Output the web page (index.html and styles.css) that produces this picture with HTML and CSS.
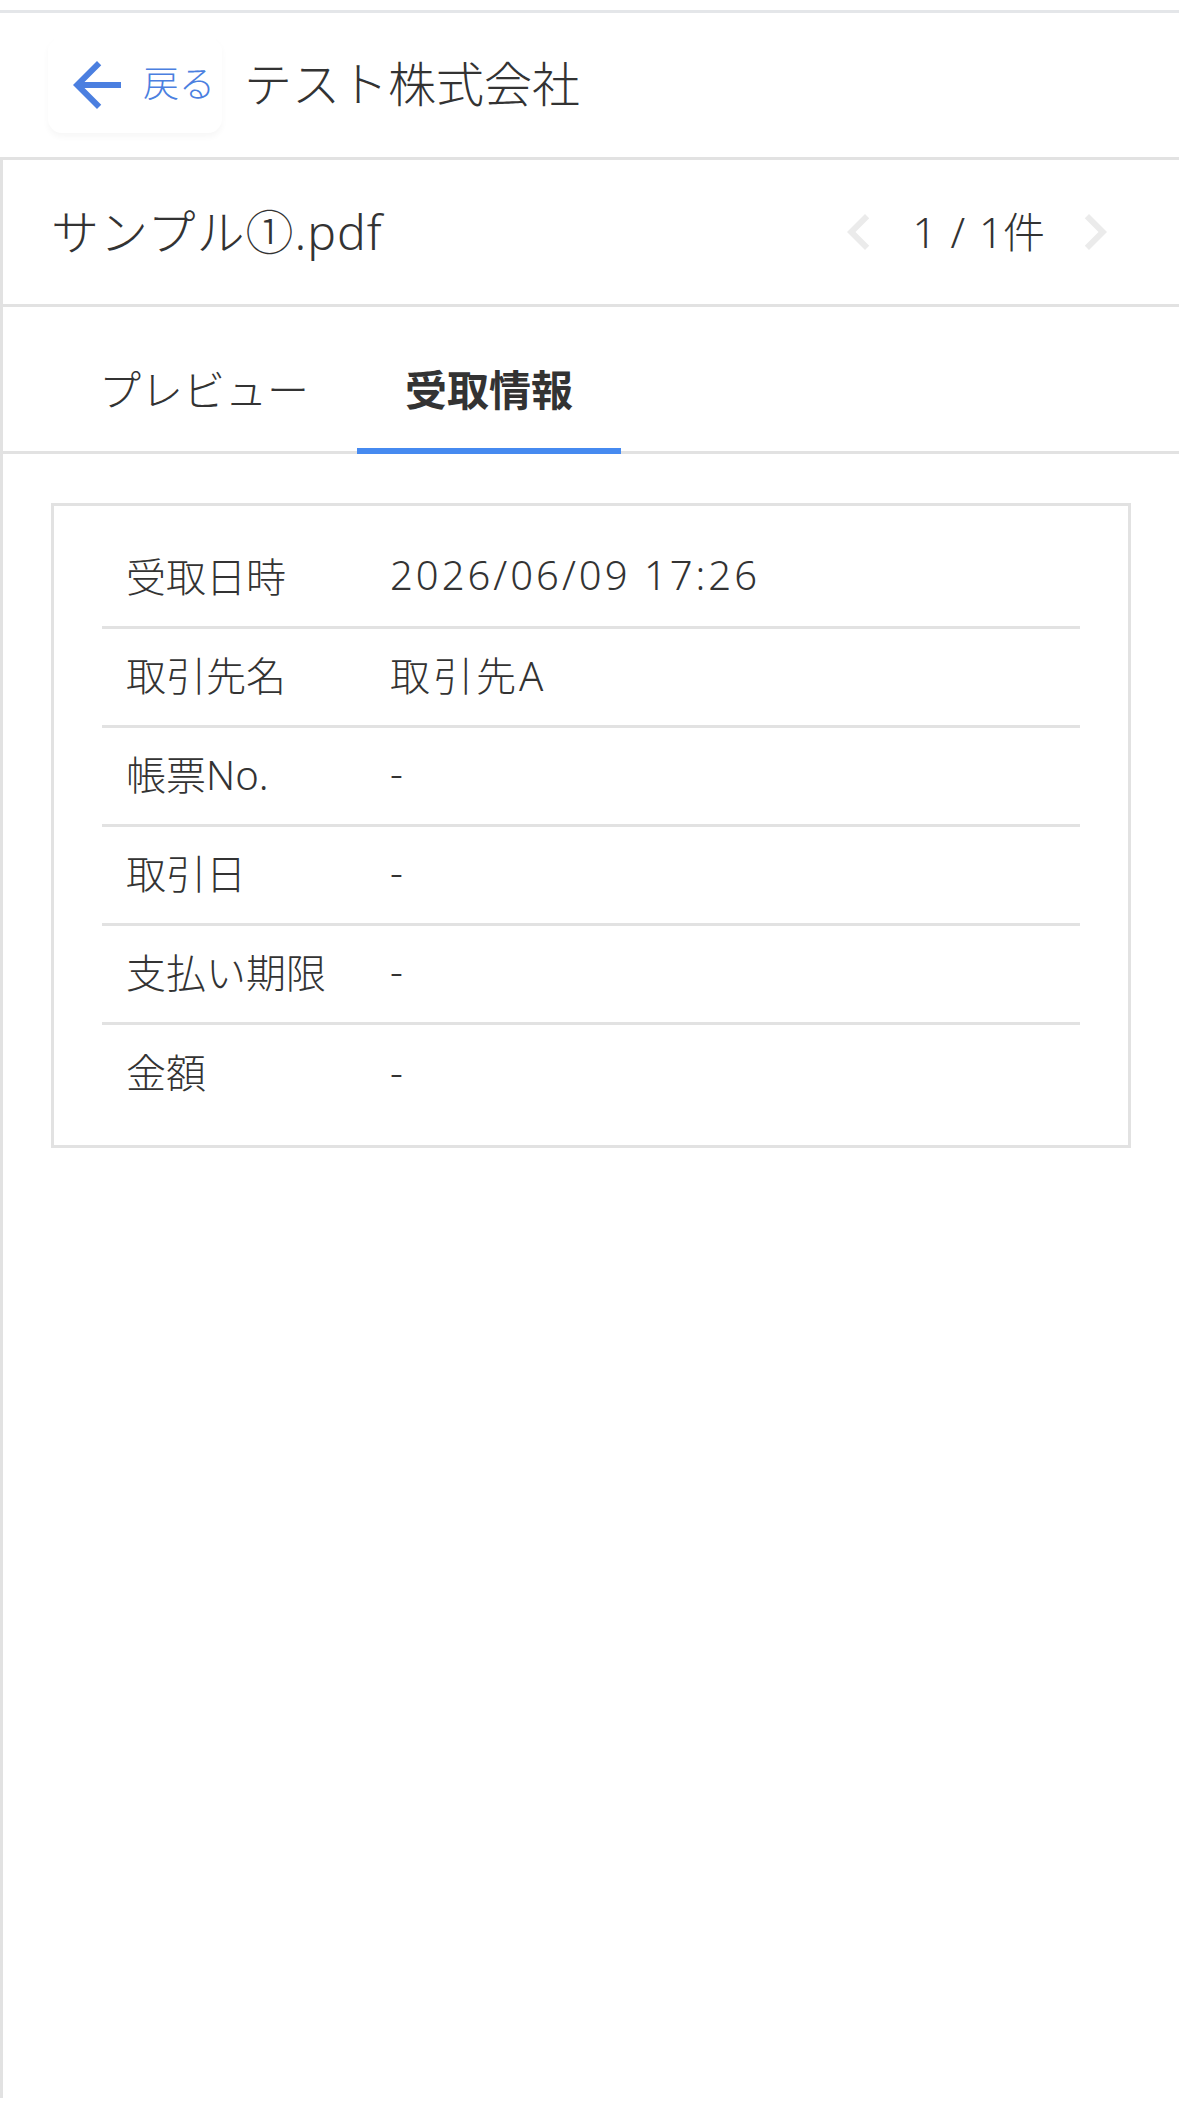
FILE: index.html
```html
<!DOCTYPE html>
<html lang="ja">
<head>
  <meta charset="UTF-8" />
  <meta name="viewport" content="width=device-width, initial-scale=1.0" />
  <title>受取情報 - テスト株式会社</title>
  <link rel="stylesheet" href="styles.css">
</head>
<body>
<div class="topbar"></div>

<!-- ヘッダー -->
<header class="header">
  <button class="back-btn" type="button">
    <svg class="back-icon" viewBox="0 0 24 24"><path d="M20 11H7.83l5.59-5.59L12 4l-8 8 8 8 1.41-1.41L7.83 13H20v-2z"/></svg>
    <span>戻る</span>
  </button>
  <h1 class="company">テスト株式会社</h1>
</header>

<main class="panel">
  <!-- ファイル名とページ送り -->
  <div class="file-row">
    <h2 class="file-name">サンプル①.pdf</h2>
    <div class="pager">
      <svg class="pager-icon" viewBox="0 0 24 24"><path d="M15.41 7.41L14 6l-6 6 6 6 1.41-1.41L10.83 12z"/></svg>
      <span class="pager-count">1 / 1件</span>
      <svg class="pager-icon" viewBox="0 0 24 24"><path d="M10 6L8.59 7.41 13.17 12l-4.58 4.59L10 18l6-6z"/></svg>
    </div>
  </div>

  <!-- タブ -->
  <nav class="tabs">
    <div class="tab">プレビュー</div>
    <div class="tab active">受取情報</div>
  </nav>

  <!-- 受取情報 -->
  <section class="info-card">
    <dl class="info-list">
      <div class="info-row"><dt>受取日時</dt><dd>2026/06/09 17:26</dd></div>
      <div class="info-row"><dt>取引先名</dt><dd>取引先A</dd></div>
      <div class="info-row"><dt>帳票No.</dt><dd>-</dd></div>
      <div class="info-row"><dt>取引日</dt><dd>-</dd></div>
      <div class="info-row"><dt>支払い期限</dt><dd>-</dd></div>
      <div class="info-row"><dt>金額</dt><dd>-</dd></div>
    </dl>
  </section>
</main>
</body>
</html>
```

FILE: styles.css
```css
* { box-sizing: border-box; }
body { margin: 0; background: #fff; color: #333; font-family: "Noto Sans", "Noto Sans CJK JP", sans-serif; font-weight: 300; }
h1, h2 { margin: 0; font-weight: 300; }

.topbar { height: 13px; border-bottom: 3px solid #e4e6e9; }

.header { height: 147px; display: flex; align-items: center; padding-left: 48px; border-bottom: 3px solid #e2e2e2; }
.back-btn { display: flex; align-items: center; gap: 10px; width: 174px; height: 96px; padding: 0 0 0 13px; border: none; border-radius: 14px; background: #fff; box-shadow: 0 4px 6px rgba(0,0,0,0.035); color: #4b7fe0; font: inherit; font-size: 36px; cursor: pointer; }
.back-btn span { padding-bottom: 8px; }
.back-icon { width: 72px; height: 72px; fill: currentColor; flex: none; }
.company { margin-left: 22px; padding-bottom: 8px; font-size: 48px; }

.panel { height: 1938px; border-left: 3px solid #e2e2e2; }

.file-row { height: 147px; display: flex; align-items: center; justify-content: space-between; padding: 0 48px; border-bottom: 3px solid #e2e2e2; }
.file-name { padding-bottom: 6px; font-size: 48px; letter-spacing: 1px; }
.pager { display: flex; align-items: center; font-size: 42px; }
.pager-icon { width: 72px; height: 72px; fill: #ebebeb; }
.pager-count { margin: 0 14px 0 18px; padding-bottom: 6px; word-spacing: 3px; }

.tabs { height: 147px; display: flex; align-items: flex-end; gap: 21px; padding-left: 69px; border-bottom: 3px solid #e2e2e2; }
.tab { position: relative; width: 264px; height: 126px; display: flex; align-items: center; justify-content: center; padding-bottom: 2px; font-size: 42px; }
.tab.active { font-weight: 700; }
.tab.active::after { content: ""; position: absolute; left: 0; right: 0; bottom: -3px; height: 6px; background: #468af0; }

.info-card { margin: 49px 48px 0; padding: 24px 48px; border: 3px solid #e2e2e2; }
.info-list { margin: 0; font-size: 40px; }
.info-row { display: flex; align-items: center; height: 99px; padding-bottom: 7px; border-bottom: 3px solid #e2e2e2; }
.info-row:last-child { height: 96px; padding-bottom: 4px; border-bottom: none; }
.info-row dt { width: 264px; padding-left: 24px; }
.info-row dd { margin: 0; padding-left: 24px; letter-spacing: 3px; }
```
